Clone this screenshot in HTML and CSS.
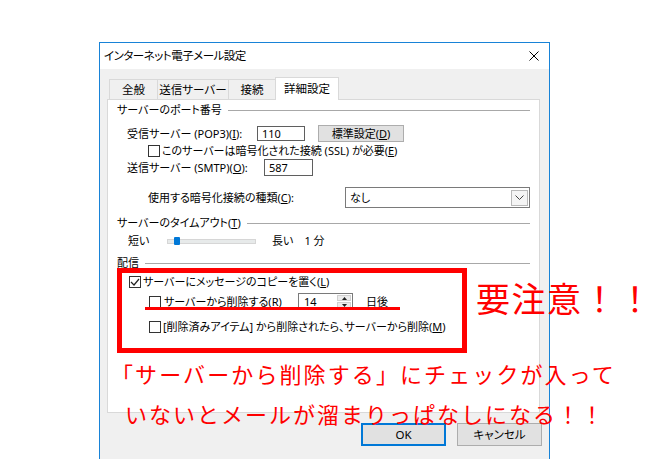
FILE: index.html
```html
<!DOCTYPE html>
<html lang="ja">
<head>
<meta charset="utf-8">
<title>インターネット電子メール設定</title>
<link rel="stylesheet" href="styles.css">
</head>
<body>
<div class="window">
  <div class="titlebar">
    <span class="title">インターネット電子メール設定</span>
    <svg class="close" width="10" height="10" viewBox="0 0 10 10"><path d="M0.5 0.5L9.5 9.5M9.5 0.5L0.5 9.5" stroke="#000" stroke-width="1"/></svg>
  </div>
  <div class="client">
    <div class="tabs">
      <div class="tab t1">全般</div>
      <div class="tab t2">送信サーバー</div>
      <div class="tab t3">接続</div>
      <div class="tab t4 active">詳細設定</div>
    </div>
    <div class="panel">
      <div class="group-head"><span>サーバーのポート番号</span><i class="rule"></i></div>

      <div class="row r-pop">
        <span class="lbl w-pop">受信サーバー (POP3)(<u>I</u>):</span>
        <span class="input in-pop">110</span>
        <span class="btn-small">標準設定(<u>D</u>)</span>
      </div>

      <div class="row r-ssl">
        <span class="check"></span>
        <span class="lbl">このサーバーは暗号化された接続 (SSL) が必要(<u>E</u>)</span>
      </div>

      <div class="row r-smtp">
        <span class="lbl w-smtp">送信サーバー (SMTP)(<u>O</u>):</span>
        <span class="input in-smtp">587</span>
      </div>

      <div class="row r-enc">
        <span class="lbl w-enc">使用する暗号化接続の種類(<u>C</u>):</span>
        <span class="combo"><span>なし</span><span class="combo-btn"><svg width="9" height="6" viewBox="0 0 9 6"><path d="M0.5 0.5L4.5 4.5L8.5 0.5" fill="none" stroke="#444" stroke-width="1"/></svg></span></span>
      </div>

      <div class="group-head g-time"><span>サーバーのタイムアウト(<u>T</u>)</span><i class="rule"></i></div>

      <div class="row r-slider">
        <span class="lbl w-short">短い</span>
        <span class="slider"><span class="track"></span><span class="thumb"></span></span>
        <span class="lbl long">長い　1 分</span>
      </div>

      <div class="group-head g-deliv"><span>配信</span><i class="rule"></i></div>

      <div class="row r-copy">
        <span class="check checked"><svg width="10" height="10" viewBox="0 0 10 10"><path d="M1 5L4 8L9 2" fill="none" stroke="#222" stroke-width="1.2"/></svg></span>
        <span class="lbl">サーバーにメッセージのコピーを置く(<u>L</u>)</span>
      </div>

      <div class="row r-del">
        <span class="check"></span>
        <span class="lbl w-del">サーバーから削除する(<u>R</u>)</span>
        <span class="spin"><span class="spin-val">14</span><span class="spin-btns"><span class="sb"><svg width="5" height="3" viewBox="0 0 5 3"><path d="M2.5 0L5 3H0Z" fill="#222"/></svg></span><span class="sb"><svg width="5" height="3" viewBox="0 0 5 3"><path d="M0 0H5L2.5 3Z" fill="#222"/></svg></span></span></span>
        <span class="lbl days">日後</span>
      </div>

      <div class="row r-trash">
        <span class="check"></span>
        <span class="lbl">[削除済みアイテム] から削除されたら、サーバーから削除(<u>M</u>)</span>
      </div>
    </div>
    <div class="buttons">
      <span class="btn default">OK</span>
      <span class="btn">キャンセル</span>
    </div>
  </div>
</div>

<div class="callout"></div>
<div class="mark"></div>
<div class="warn">要注意！！</div>
<div class="note n1">「サーバーから削除する」にチェックが入って</div>
<div class="note n2">いないとメールが溜まりっぱなしになる！！</div>
</body>
</html>
```

FILE: styles.css
```css
html, body {
  margin: 0;
  padding: 0;
  background: #fff;
}
body {
  position: relative;
  width: 650px;
  height: 459px;
  overflow: hidden;
  font-family: "Noto Sans CJK JP", "Noto Sans", sans-serif;
  color: #000;
}

.window {
  margin: 42px 0 0 99px;
  width: 451px;
  height: 417px;
  box-sizing: border-box;
  border: 1px solid #1883d7;
  border-bottom: none;
  background: #f0f0f0;
  display: flex;
  flex-direction: column;
  font-family: "Noto Sans", "Noto Sans CJK JP", sans-serif;
  font-size: 11px;
  font-feature-settings: "palt";
  white-space: nowrap;
}

.titlebar {
  height: 26px;
  flex: none;
  background: #fff;
  display: flex;
  align-items: center;
  justify-content: space-between;
  padding: 0 10px 0 4px;
}
.title { line-height: 16px; font-size: 11.5px; letter-spacing: -0.5px; }

.client {
  flex: 1;
  padding: 8px 7px 0 7px;
}

.tabs {
  display: flex;
  align-items: flex-end;
  height: 22px;
  padding-left: 2px;
}
.tab {
  height: 20px;
  box-sizing: border-box;
  border: 1px solid #d9d9d9;
  border-bottom: none;
  margin-right: -1px;
  display: flex;
  align-items: center;
  justify-content: center;
  line-height: 16px;
  font-size: 11.5px;
  background: #f0f0f0;
}
.t1 { width: 49px; }
.t2 { width: 72px; }
.t3 { width: 48px; }
.t4 { width: 64px; }
.tab.active {
  height: 23px;
  margin-bottom: -1px;
  background: #fff;
  position: relative;
  z-index: 1;
}

.panel {
  width: 433px;
  height: 314px;
  box-sizing: border-box;
  border: 1px solid #d9d9d9;
  background: #fff;
  padding: 2px 9px 0 9px;
}

.group-head {
  display: flex;
  align-items: center;
  height: 16px;
  line-height: 16px;
}
.rule {
  flex: 1;
  height: 0;
  border-top: 1px solid #a8a8a8;
  margin-left: 6px;
}
.g-time { margin-top: 7px; }
.g-deliv { margin-top: 7px; }

.row {
  display: flex;
  align-items: center;
  line-height: 16px;
}
.lbl { flex: none; }

.r-pop { height: 17px; margin-top: 7px; padding-left: 10px; }
.w-pop { width: 130px; }
.input {
  box-sizing: border-box;
  border: 1px solid #5f5f5f;
  background: #fff;
  padding-left: 4px;
  display: flex;
  align-items: center;
}
.in-pop { width: 48px; height: 15px; }
.btn-small {
  margin-left: 13px;
  width: 86px;
  height: 17px;
  box-sizing: border-box;
  border: 1px solid #adadad;
  background: #e1e1e1;
  display: flex;
  align-items: center;
  justify-content: center;
}

.r-ssl { height: 14px; margin-top: 2px; padding-left: 31px; }
.check {
  flex: none;
  width: 12px;
  height: 12px;
  box-sizing: border-box;
  border: 1px solid #333;
  background: #fff;
  margin-right: 2px;
  display: flex;
  align-items: center;
  justify-content: center;
}

.r-smtp { height: 17px; margin-top: 1px; padding-left: 10px; }
.w-smtp { width: 137px; }
.in-smtp { width: 49px; height: 17px; }

.r-enc { height: 21px; margin-top: 11px; padding-left: 31px; }
.w-enc { width: 197px; }
.combo {
  width: 186px;
  height: 21px;
  box-sizing: border-box;
  border: 1px solid #7a7a7a;
  background: #fff;
  display: flex;
  align-items: center;
  padding-left: 4px;
}
.combo-btn {
  margin-left: auto;
  margin-right: 1px;
  width: 17px;
  height: 16px;
  box-sizing: border-box;
  border: 1px solid #b8b8b8;
  background: #f4f4f4;
  display: flex;
  align-items: center;
  justify-content: center;
}

.r-slider { height: 14px; margin-top: 3px; padding-left: 11px; }
.w-short { width: 39px; }
.slider {
  position: relative;
  width: 89px;
  height: 14px;
  display: flex;
  align-items: center;
}
.track {
  width: 89px;
  height: 5px;
  box-sizing: border-box;
  border: 1px solid #d6d6d6;
  background: #e7eaea;
}
.thumb {
  position: absolute;
  left: 7px;
  top: 3px;
  width: 6px;
  height: 8px;
  border-radius: 1px;
  background: #0078d7;
}
.long { margin-left: 16px; }

.r-copy { height: 14px; margin-top: 4px; padding-left: 12px; }
.r-del { height: 17px; margin-top: 4px; padding-left: 32px; }
.w-del { width: 134px; padding-left: 1px; }
.spin {
  width: 55px;
  height: 17px;
  box-sizing: border-box;
  border: 1px solid #7a7a7a;
  background: #fff;
  display: flex;
  align-items: center;
}
.spin-val { padding-left: 5px; }
.spin-btns {
  margin-left: auto;
  margin-right: 1px;
  width: 14px;
  height: 13px;
  display: flex;
  flex-direction: column;
  gap: 1px;
}
.sb {
  flex: 1;
  background: #ececec;
  border: 1px solid #d0d0d0;
  display: flex;
  align-items: center;
  justify-content: center;
}
.days { margin-left: 13px; }

.r-trash { height: 14px; margin-top: 10px; padding-left: 32px; }

.buttons {
  display: flex;
  justify-content: flex-end;
  gap: 11px;
  margin-top: 10px;
}
.btn {
  width: 85px;
  height: 23px;
  box-sizing: border-box;
  border: 1px solid #adadad;
  background: #e1e1e1;
  display: flex;
  align-items: center;
  justify-content: center;
  font-size: 11.5px;
  line-height: 13px;
}
.btn.default { border: 2px solid #0078d7; }

/* annotations laid over the screenshot */
.callout {
  position: absolute;
  left: 117px;
  top: 268px;
  width: 350px;
  height: 85px;
  box-sizing: border-box;
  border: 5px solid #ff0000;
}
.mark {
  position: absolute;
  left: 145px;
  top: 307px;
  width: 255px;
  height: 3px;
  background: #ff0000;
}
.warn {
  position: absolute;
  left: 476px;
  top: 281px;
  font-size: 34px;
  line-height: 34px;
  letter-spacing: 1.5px;
  color: #ff0000;
  white-space: nowrap;
}
.note {
  position: absolute;
  font-size: 22px;
  line-height: 16px;
  color: #ff0000;
  white-space: nowrap;
}
.n1 { left: 111px; top: 365px; letter-spacing: 2.1px; }
.n2 { left: 125px; top: 405px; letter-spacing: 2px; }
```
